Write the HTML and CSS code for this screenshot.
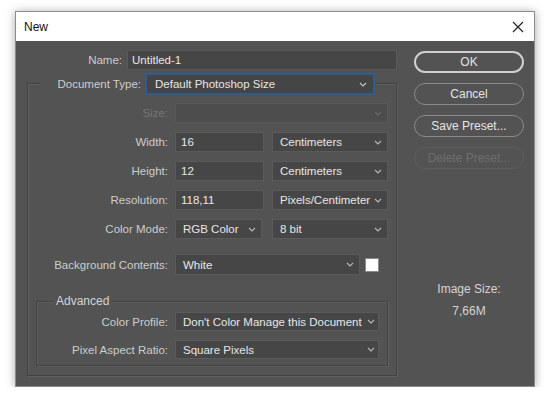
FILE: index.html
```html
<!DOCTYPE html>
<html>
<head>
<meta charset="utf-8">
<title>New</title>
<link rel="stylesheet" href="styles.css">
</head>
<body>
<div class="window">
  <div class="titlebar">
    <span class="title">New</span>
    <svg class="close" width="12" height="12" viewBox="0 0 12 12"><path d="M1 1 L11 11 M11 1 L1 11" stroke="#222" stroke-width="1.2" fill="none"/></svg>
  </div>
  <div class="content">
    <div class="main">
      <div class="name-row">
        <span class="lbl name-lbl">Name:</span>
        <div class="field name-field">Untitled-1</div>
      </div>
      <div class="group">
        <div class="group-head">
          <span class="lbl head-lbl">Document Type:</span>
          <div class="select doc-select">Default Photoshop Size<svg class="chev" width="8" height="5" viewBox="0 0 8 5"><path d="M1 1 L4 4 L7 1" stroke="#c8c8c8" stroke-width="1.1" fill="none"/></svg></div>
        </div>
        <div class="row first">
          <span class="lbl dim">Size:</span>
          <div class="select disabled full"><svg class="chev" width="8" height="5" viewBox="0 0 8 5"><path d="M1 1 L4 4 L7 1" stroke="#6a6a6a" stroke-width="1.1" fill="none"/></svg></div>
        </div>
        <div class="row">
          <span class="lbl">Width:</span>
          <div class="field num">16</div>
          <div class="select unit">Centimeters<svg class="chev" width="8" height="5" viewBox="0 0 8 5"><path d="M1 1 L4 4 L7 1" stroke="#b8b8b8" stroke-width="1.1" fill="none"/></svg></div>
        </div>
        <div class="row">
          <span class="lbl">Height:</span>
          <div class="field num">12</div>
          <div class="select unit">Centimeters<svg class="chev" width="8" height="5" viewBox="0 0 8 5"><path d="M1 1 L4 4 L7 1" stroke="#b8b8b8" stroke-width="1.1" fill="none"/></svg></div>
        </div>
        <div class="row">
          <span class="lbl">Resolution:</span>
          <div class="field num">118,11</div>
          <div class="select unit">Pixels/Centimeter<svg class="chev" width="8" height="5" viewBox="0 0 8 5"><path d="M1 1 L4 4 L7 1" stroke="#b8b8b8" stroke-width="1.1" fill="none"/></svg></div>
        </div>
        <div class="row">
          <span class="lbl">Color Mode:</span>
          <div class="select mode">RGB Color<svg class="chev" width="8" height="5" viewBox="0 0 8 5"><path d="M1 1 L4 4 L7 1" stroke="#b8b8b8" stroke-width="1.1" fill="none"/></svg></div>
          <div class="select unit">8 bit<svg class="chev" width="8" height="5" viewBox="0 0 8 5"><path d="M1 1 L4 4 L7 1" stroke="#b8b8b8" stroke-width="1.1" fill="none"/></svg></div>
        </div>
        <div class="row bg-row">
          <span class="lbl">Background Contents:</span>
          <div class="select bg-select">White<svg class="chev" width="8" height="5" viewBox="0 0 8 5"><path d="M1 1 L4 4 L7 1" stroke="#b8b8b8" stroke-width="1.1" fill="none"/></svg></div>
          <div class="swatch"></div>
        </div>
        <div class="adv">
          <div class="adv-legend">Advanced</div>
          <div class="row adv-row first-adv">
            <span class="lbl adv-lbl">Color Profile:</span>
            <div class="select adv-select">Don't Color Manage this Document<svg class="chev" width="8" height="5" viewBox="0 0 8 5"><path d="M1 1 L4 4 L7 1" stroke="#b8b8b8" stroke-width="1.1" fill="none"/></svg></div>
          </div>
          <div class="row adv-row">
            <span class="lbl adv-lbl">Pixel Aspect Ratio:</span>
            <div class="select adv-select">Square Pixels<svg class="chev" width="8" height="5" viewBox="0 0 8 5"><path d="M1 1 L4 4 L7 1" stroke="#b8b8b8" stroke-width="1.1" fill="none"/></svg></div>
          </div>
        </div>
      </div>
    </div>
    <div class="side">
      <div class="btn default">OK</div>
      <div class="btn">Cancel</div>
      <div class="btn">Save Preset...</div>
      <div class="btn off">Delete Preset...</div>
      <div class="img-size">
        <div class="img-lbl">Image Size:</div>
        <div class="img-val">7,66M</div>
      </div>
    </div>
  </div>
</div>
</body>
</html>
```

FILE: styles.css
```css
* { box-sizing: border-box; }
html, body { margin: 0; }
body {
  background: #ffffff;
  padding: 11px 0 0 15px;
  font-family: "Liberation Sans", Arial, sans-serif;
  font-size: 11.5px;
}
.window {
  width: 520px;
  height: 376px;
  border: 1px solid #8c8c8c;
  box-shadow: 0 1px 9px rgba(0, 0, 0, 0.35);
  display: flex;
  flex-direction: column;
  background: #535353;
}
.titlebar {
  height: 29px;
  background: #ffffff;
  display: flex;
  align-items: center;
  justify-content: space-between;
  padding: 0 10px 0 8px;
}
.title { color: #111; font-size: 12px; }
.close { display: block; }
.content {
  flex: 1;
  display: flex;
  background: #535353;
  color: #d2d2d2;
}
.main {
  width: 384px;
  padding-top: 9px;
}
.lbl {
  color: #cdcdcd;
  text-align: right;
  white-space: nowrap;
}
.dim { color: #767676; }
.field, .select {
  height: 20px;
  background: #464646;
  border: 1px solid #5a5a5a;
  color: #e6e6e6;
  display: flex;
  align-items: center;
  padding-left: 5px;
  white-space: nowrap;
}
.select {
  justify-content: space-between;
  padding-right: 5px;
  padding-left: 7px;
}
.chev { display: block; flex: none; }
.name-row {
  display: flex;
  align-items: center;
  gap: 5px;
  height: 20px;
}
.name-lbl { width: 106px; }
.name-field { width: 270px; padding-left: 4px; }

.group {
  margin: 13px 0 0 11px;
  width: 370px;
  height: 293px;
  border: 1px solid #424242;
  box-shadow: inset 1px 1px 0 #606060, 1px 1px 0 #606060;
  padding-right: 7px;
}
.group-head {
  margin: -11px 0 0 12px;
  width: 337px;
  height: 22px;
  background: #535353;
  display: flex;
  align-items: center;
  gap: 4px;
  padding-right: 2px;
}
.head-lbl { width: 101px; }
.doc-select {
  width: 230px;
  height: 22px;
  border: 2px solid #2c5d8e;
  background: #454545;
  padding-left: 8px;
  padding-right: 6px;
}
.row {
  display: flex;
  align-items: center;
  height: 20px;
  margin-top: 9px;
}
.row .lbl { width: 140px; margin-right: 7px; flex: none; }
.row.first { margin-top: 8px; }
.disabled { background: #4d4d4d; border-color: #585858; }
.full { width: 213px; justify-content: flex-end; }
.num { width: 89px; }
.unit { width: 116px; margin-left: 8px; }
.mode { width: 87px; }
.mode + .unit { margin-left: 10px; }
.bg-row { margin-top: 15px; height: 21px; }
.bg-select { width: 185px; height: 21px; }
.swatch {
  width: 14px;
  height: 14px;
  background: #ffffff;
  border: 1px solid #8a8a8a;
  margin-left: 5px;
}
.adv {
  margin: 26px 0 0 8px;
  width: 352px;
  height: 65px;
  border: 1px solid #424242;
  box-shadow: inset 1px 1px 0 #606060, 1px 1px 0 #606060;
}
.adv-legend {
  margin: -8px 0 0 16px;
  padding: 0 3px;
  width: fit-content;
  background: #535353;
  color: #d4d4d4;
  line-height: 14px;
  font-size: 12px;
}
.adv-row { height: 19px; }
.adv-row.first-adv { margin-top: 4px; }
.adv-row .lbl.adv-lbl { width: 131px; }
.adv-select { width: 204px; height: 19px; padding-right: 3px; }

.side {
  margin-left: 14px;
  width: 110px;
  padding-top: 10px;
  display: flex;
  flex-direction: column;
  gap: 10px;
}
.btn {
  height: 22px;
  border: 1px solid #8a8a8a;
  border-radius: 11px;
  color: #e4e4e4;
  display: flex;
  align-items: center;
  justify-content: center;
  background: #535353;
  font-size: 12px;
}
.btn.default {
  border: 2px solid #cfcfcf;
}
.btn.off {
  border-color: #5e5e5e;
  color: #6e6e6e;
}
.img-size {
  margin-top: 102px;
  text-align: center;
  color: #d4d4d4;
  font-size: 12px;
}
.img-lbl { line-height: 16px; }
.img-val { line-height: 16px; margin-top: 6px; }
```
